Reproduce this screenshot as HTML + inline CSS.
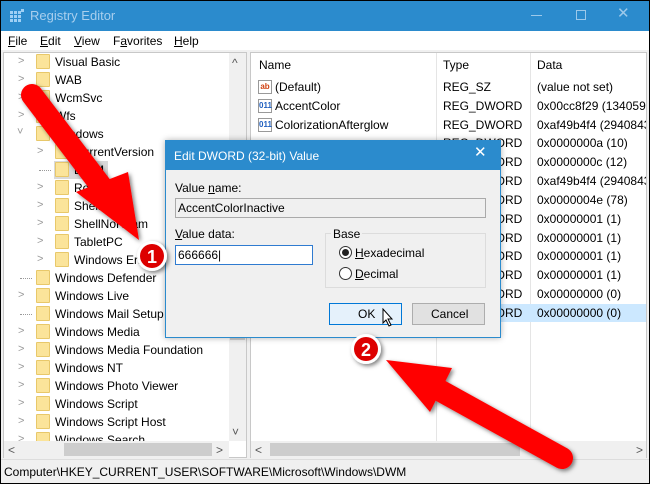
<!DOCTYPE html>
<html><head><style>
*{margin:0;padding:0;box-sizing:border-box}
body{width:650px;height:484px;overflow:hidden;background:#000;font-family:"Liberation Sans",sans-serif;font-size:12px;color:#000;position:relative}
.abs{position:absolute}
.t{position:absolute;white-space:nowrap;line-height:14px}
.fold{position:absolute;width:14px;height:15px;background:#fbe49a;border:1px solid #e8c86a;border-radius:1px}
.chev{position:absolute;color:#999;font-size:11px}
u{text-decoration:underline}
</style></head><body>
<div class="abs" style="left:1px;top:1px;width:648px;height:482px;background:#f0f0f0"></div>
<div class="abs" style="left:1px;top:1px;width:648px;height:30px;background:#2b8bcd"></div>
<svg class="abs" style="left:10px;top:9px" width="14" height="14"><g fill="#9fd0f5"><rect x="0" y="2" width="3" height="3"/><rect x="4" y="2" width="3" height="3"/><rect x="8" y="2" width="3" height="3"/><rect x="0" y="6" width="3" height="3"/><rect x="4" y="6" width="3" height="3"/><rect x="8" y="6" width="3" height="3"/><rect x="0" y="10" width="3" height="3"/><rect x="4" y="10" width="3" height="3"/><rect x="8" y="10" width="3" height="3"/><rect x="11" y="0" width="3" height="3"/></g></svg>
<div class="t" style="left:30px;top:9px;color:#a8cfee;font-size:13px">Registry Editor</div>
<div class="abs" style="left:531px;top:15px;width:11px;height:1px;background:#9cc9ea"></div>
<div class="abs" style="left:576px;top:10px;width:10px;height:10px;border:1px solid #9cc9ea"></div>
<div class="t" style="left:617px;top:7px;color:#9cc9ea;font-size:15px">✕</div>
<div class="abs" style="left:1px;top:31px;width:648px;height:19px;background:#fff"></div>
<div class="t" style="left:8px;top:34px"><u>F</u>ile</div>
<div class="t" style="left:40px;top:34px"><u>E</u>dit</div>
<div class="t" style="left:74px;top:34px"><u>V</u>iew</div>
<div class="t" style="left:113px;top:34px">F<u>a</u>vorites</div>
<div class="t" style="left:174px;top:34px"><u>H</u>elp</div>
<div class="abs" style="left:3px;top:52px;width:244px;height:406px;background:#fff;border:1px solid #c8c8c8"></div>
<div class="abs" style="left:229px;top:53px;width:17px;height:388px;background:#f0f0f0"></div>
<div class="abs" style="left:230px;top:300px;width:15px;height:40px;background:#cdcdcd"></div>
<div class="t" style="left:232px;top:56px;color:#555">^</div>
<div class="t" style="left:232px;top:425px;color:#555">˅</div>
<div class="abs" style="left:4px;top:441px;width:225px;height:17px;background:#f0f0f0"></div>
<div class="abs" style="left:64px;top:443px;width:148px;height:13px;background:#cdcdcd"></div>
<div class="t" style="left:8px;top:443px;color:#555">&lt;</div>
<div class="t" style="left:216px;top:443px;color:#555">&gt;</div>
<div class="abs" style="left:4px;top:53px;width:225px;height:388px;overflow:hidden"><div id="tree" class="abs" style="left:-4px;top:-53px;width:300px;height:500px"></div></div>
<div class="abs" style="left:250px;top:52px;width:397px;height:406px;background:#fff;border:1px solid #c8c8c8"></div>
<div class="abs" style="left:436px;top:53px;width:1px;height:388px;background:#e5e5e5"></div>
<div class="abs" style="left:530px;top:53px;width:1px;height:388px;background:#e5e5e5"></div>
<div class="t" style="left:259px;top:58px">Name</div>
<div class="t" style="left:443px;top:58px">Type</div>
<div class="t" style="left:537px;top:58px">Data</div>
<div class="abs" style="left:251px;top:304px;width:395px;height:18px;background:#cce8ff"></div>
<div class="abs" style="left:251px;top:53px;width:395px;height:388px;overflow:hidden"><div id="rows" class="abs" style="left:-251px;top:-53px;width:700px;height:500px"></div></div>
<div class="abs" style="left:251px;top:441px;width:395px;height:17px;background:#f0f0f0"></div>
<div class="abs" style="left:270px;top:443px;width:250px;height:13px;background:#cdcdcd"></div>
<div class="t" style="left:255px;top:443px;color:#555">&lt;</div>
<div class="t" style="left:636px;top:443px;color:#555">&gt;</div>
<div class="abs" style="left:1px;top:459px;width:648px;height:24px;background:#f0f0f0;border-top:1px solid #ddd"></div>
<div class="t" style="left:4px;top:465px">Computer\HKEY_CURRENT_USER\SOFTWARE\Microsoft\Windows\DWM</div>
<div class="abs" style="left:165px;top:140px;width:336px;height:198px;background:#f0f0f0;border:1px solid #2b8bcd;box-shadow:0 0 6px rgba(0,0,0,.3)"></div>
<div class="abs" style="left:165px;top:140px;width:336px;height:30px;background:#2b8bcd"></div>
<div class="t" style="left:174px;top:149px;color:#fff">Edit DWORD (32-bit) Value</div>
<div class="t" style="left:474px;top:146px;color:#fff;font-size:15px">✕</div>
<div class="t" style="left:175px;top:181px">Value <u>n</u>ame:</div>
<div class="abs" style="left:175px;top:198px;width:311px;height:20px;background:#f0f0f0;border:1px solid #aaa"></div>
<div class="t" style="left:178px;top:201px">AccentColorInactive</div>
<div class="t" style="left:175px;top:227px"><u>V</u>alue data:</div>
<div class="abs" style="left:175px;top:245px;width:138px;height:20px;background:#fff;border:1px solid #2f7bd0"></div>
<div class="t" style="left:178px;top:248px">666666|</div>
<div class="abs" style="left:325px;top:233px;width:161px;height:55px;border:1px solid #dcdcdc"></div>
<div class="t" style="left:331px;top:227px;background:#f0f0f0;padding:0 2px">Base</div>
<div class="abs" style="left:339px;top:246px;width:13px;height:13px;border:1px solid #333;border-radius:50%;background:#fff"></div>
<div class="abs" style="left:342px;top:249px;width:7px;height:7px;border-radius:50%;background:#222"></div>
<div class="t" style="left:355px;top:246px"><u>H</u>exadecimal</div>
<div class="abs" style="left:339px;top:267px;width:13px;height:13px;border:1px solid #333;border-radius:50%;background:#fff"></div>
<div class="t" style="left:355px;top:267px"><u>D</u>ecimal</div>
<div class="abs" style="left:329px;top:303px;width:73px;height:22px;background:#e5f1fb;border:1px solid #0078d7"></div>
<div class="t" style="left:358px;top:307px">OK</div>
<div class="abs" style="left:412px;top:303px;width:73px;height:22px;background:#e1e1e1;border:1px solid #adadad"></div>
<div class="t" style="left:431px;top:307px">Cancel</div>
<svg class="abs" style="left:382px;top:308px" width="14" height="20"><path d="M1 1 L1 15 L4 12 L7 18 L9 17 L6 11 L10 11 Z" fill="#fff" stroke="#000" stroke-width="1"/></svg>
<svg class="abs" style="left:0;top:0" width="650" height="484">
<defs><filter id="s" x="-20%" y="-20%" width="140%" height="140%"><feDropShadow dx="2" dy="2" stdDeviation="2" flood-opacity=".5"/></filter></defs>
<g filter="url(#s)" fill="#f00">
<line x1="32" y1="95" x2="108" y2="195" stroke="#f00" stroke-width="22" stroke-linecap="round"/>
<polygon points="76,192 128,172 139,240"/>
<line x1="562" y1="458" x2="430" y2="385" stroke="#f00" stroke-width="22" stroke-linecap="round"/>
<polygon points="452,368 430,412 386,360"/>
</g>
<g filter="url(#s)"><circle cx="152" cy="256" r="15" fill="#fff"/><circle cx="152" cy="256" r="12" fill="#d00"/>
<circle cx="366" cy="349" r="15" fill="#fff"/><circle cx="366" cy="349" r="12" fill="#d00"/></g>
<text x="152" y="263" text-anchor="middle" fill="#fff" font-family="Liberation Sans" font-weight="bold" font-size="18">1</text>
<text x="366" y="356" text-anchor="middle" fill="#fff" font-family="Liberation Sans" font-weight="bold" font-size="18">2</text>
</svg>
<script>
var tr=[[0,'Visual Basic',1],[0,'WAB',1],[0,'WcmSvc',1],[0,'Wfs',1],[0,'Windows',2],[1,'CurrentVersion',1],[1,'DWM',0],[1,'Roaming',1],[1,'Shell',1],[1,'ShellNoRoam',1],[1,'TabletPC',1],[1,'Windows Error',1],[0,'Windows Defender',0],[0,'Windows Live',1],[0,'Windows Mail Setup',0],[0,'Windows Media',1],[0,'Windows Media Foundation',1],[0,'Windows NT',1],[0,'Windows Photo Viewer',1],[0,'Windows Script',1],[0,'Windows Script Host',1],[0,'Windows Search',1]];
var h='';tr.forEach(function(r,i){var y=54+i*18,x=r[0]?55:36;
if(r[2]==1)h+='<div class="chev" style="left:'+(x-18)+'px;top:'+(y+1)+'px">&gt;</div>';
if(r[2]==2)h+='<div class="chev" style="left:'+(x-19)+'px;top:'+(y)+'px">˅</div>';
if(r[2]==0)h+='<div class="abs" style="left:'+(x-16)+'px;top:'+(y+8)+'px;width:12px;border-top:1px dotted #999"></div>';
if(r[1]=='DWM')h+='<div class="abs" style="left:'+(x-1)+'px;top:'+(y-1)+'px;width:54px;height:18px;background:#d9d9d9"></div>';
h+='<div class="fold" style="left:'+x+'px;top:'+y+'px"></div><div class="t" style="left:'+(x+19)+'px;top:'+(y+1)+'px">'+r[1]+'</div>';});
document.getElementById('tree').innerHTML=h;
var rw=[['(Default)','REG_SZ','(value not set)'],['AccentColor','REG_DWORD','0x00cc8f29 (13405993)'],['ColorizationAfterglow','REG_DWORD','0xaf49b4f4 (2940843252)'],['','REG_DWORD','0x0000000a (10)'],['','REG_DWORD','0x0000000c (12)'],['','REG_DWORD','0xaf49b4f4 (2940843252)'],['','REG_DWORD','0x0000004e (78)'],['','REG_DWORD','0x00000001 (1)'],['','REG_DWORD','0x00000001 (1)'],['','REG_DWORD','0x00000001 (1)'],['','REG_DWORD','0x00000001 (1)'],['','REG_DWORD','0x00000000 (0)'],['','REG_DWORD','0x00000000 (0)']];
h='';rw.forEach(function(r,i){var y=Math.round(80+i*18.83);
if(r[0]){h+='<div class="abs" style="left:258px;top:'+(y)+'px;width:14px;height:14px;border:1px solid #999;background:#fff;font-size:8px;line-height:12px;text-align:center;font-weight:bold;color:'+(i?'#2060c0':'#d04010')+'">'+(i?'011':'ab')+'</div><div class="t" style="left:275px;top:'+y+'px">'+r[0]+'</div>';}
h+='<div class="t" style="left:443px;top:'+y+'px">'+r[1]+'</div><div class="t" style="left:537px;top:'+y+'px">'+r[2]+'</div>';});
document.getElementById('rows').innerHTML=h;
</script>
</body></html>
